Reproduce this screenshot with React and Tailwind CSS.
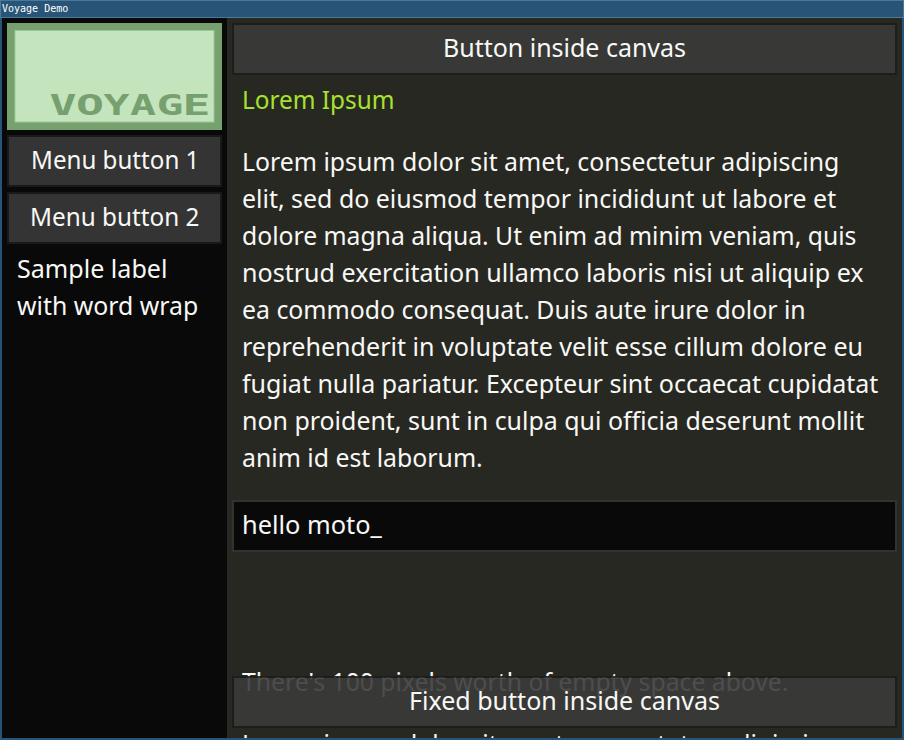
import { useLayoutEffect, useRef, useState } from "react";

// One line of text, fitted horizontally to the given advance width.
function Line({ w, children, className = "" }) {
  const ref = useRef(null);
  const [scale, setScale] = useState(1);
  useLayoutEffect(() => {
    setScale(w / ref.current.offsetWidth);
  }, [w]);
  return (
    <div className={`h-[37px] whitespace-nowrap pt-px ${className}`} style={{ width: w }}>
      <span ref={ref} className="inline-block origin-left" style={{ transform: `scaleX(${scale})` }}>
        {children}
      </span>
    </div>
  );
}

const paragraph = [
  ["Lorem ipsum dolor sit amet, consectetur adipiscing", 597.5],
  ["elit, sed do eiusmod tempor incididunt ut labore et", 594.5],
  ["dolore magna aliqua. Ut enim ad minim veniam, quis", 614.5],
  ["nostrud exercitation ullamco laboris nisi ut aliquip ex", 622],
  ["ea commodo consequat. Duis aute irure dolor in", 563.5],
  ["reprehenderit in voluptate velit esse cillum dolore eu", 621.5],
  ["fugiat nulla pariatur. Excepteur sint occaecat cupidatat", 636.5],
  ["non proident, sunt in culpa qui officia deserunt mollit", 622.5],
  ["anim id est laborum.", 240.5],
];

// Each wordmark letter with its centre and set width.
const letters = [
  ["V", 56, 27],
  ["O", 83, 28],
  ["Y", 109.5, 26],
  ["A", 136, 26],
  ["G", 163, 27],
  ["E", 189.5, 28],
];

function Logo() {
  return (
    <svg className="block h-[107px] w-[215px]" viewBox="0 0 215 107">
      <rect width="215" height="107" fill="#76a06e" />
      <rect x="7.5" y="7" width="200" height="92.5" fill="#9cc897" />
      <rect x="8.5" y="8" width="198" height="90.5" fill="#c4e4be" />
      <g fill="#76a06e" fontFamily="'DejaVu Sans Mono', monospace" fontWeight="700" fontSize="29">
        {letters.map(([c, cx, w]) => (
          <text key={c} x={cx - w / 2} y="92" textLength={w} lengthAdjust="spacingAndGlyphs">{c}</text>
        ))}
      </g>
    </svg>
  );
}

function Button({ w, children }) {
  return (
    <button className="flex h-[52px] w-full shrink-0 justify-center border-2 border-[#1c1c1c]/90 bg-[#3a3a3a]/90 bg-clip-padding pt-[3px] text-left">
      <Line w={w}>{children}</Line>
    </button>
  );
}

export default function App() {
  return (
    <div className="flex h-[740px] w-[904px] flex-col overflow-hidden bg-[#285577] font-['Noto_Sans','Open_Sans',sans-serif] text-[26px] leading-[37px] text-[#f8f8f6]">
      <div className="h-[18px] shrink-0 border border-[#4c7899] pl-px font-['DejaVu_Sans_Mono',monospace] text-[10px] leading-[16px] text-white">
        Voyage Demo
      </div>
      <div className="flex h-[720px] px-[2px]">
        <aside className="flex w-[225px] shrink-0 flex-col gap-[5px] bg-[#090909] p-[5px]">
          <Logo />
          <Button w={168}>Menu button 1</Button>
          <Button w={169}>Menu button 2</Button>
          <div className="px-[10px]">
            <Line w={150.5}>Sample label</Line>
            <Line w={181.5}>with word wrap</Line>
          </div>
        </aside>
        <main className="relative flex min-w-0 flex-1 flex-col overflow-hidden bg-[#282822] p-[5px]">
          <Button w={243}>Button inside canvas</Button>
          <div className="mt-[5px] px-[10px] text-[#a6e22e]">
            <Line w={152.5}>Lorem Ipsum</Line>
          </div>
          <div className="mt-[25px] px-[10px]">
            {paragraph.map(([text, w]) => (
              <Line key={text} w={w}>{text}</Line>
            ))}
          </div>
          <div className="mt-[25px] h-[52px] shrink-0 border-2 border-[#323230] bg-[#090909] px-2 pt-[3px]">
            <Line w={139.5}>hello moto_</Line>
          </div>
          <div className="mt-[110px] px-[10px]">
            <Line w={546}>There's 100 pixels worth of empty space above.</Line>
            <Line w={597.5} className="mt-[25px]">Lorem ipsum dolor sit amet, consectetur adipiscing</Line>
          </div>
          <div className="absolute inset-x-[5px] bottom-[10px]">
            <Button w={311}>Fixed button inside canvas</Button>
          </div>
        </main>
      </div>
    </div>
  );
}
